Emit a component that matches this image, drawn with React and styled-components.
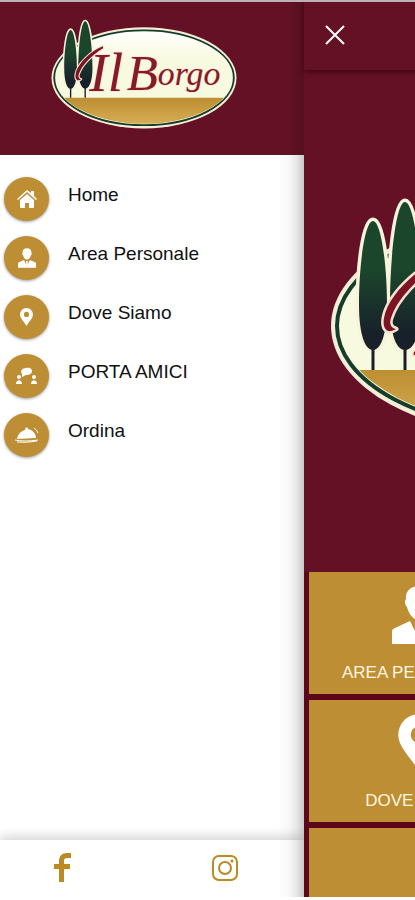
import React, { useId } from "react";
import styled, { createGlobalStyle } from "styled-components";

const wine = "#651125";
const gold = "#bd8e34";

const GlobalStyle = createGlobalStyle`
  *, *::before, *::after { box-sizing: border-box; }
  body {
    margin: 0;
    background: #fff;
    font-family: "Liberation Sans", Arial, sans-serif;
  }
`;

const Shell = styled.div`
  display: flex;
  min-height: 100vh;
  overflow: hidden;
  border-top: 2px solid #bcb1b4;
  border-bottom: 3px solid #fff;
`;

const Drawer = styled.aside`
  display: flex;
  flex-direction: column;
  flex: 0 0 304px;
  background: #fff;
`;

const Brand = styled.header`
  display: flex;
  justify-content: center;
  padding: 17px 16px 26px 0;
  background: linear-gradient(to left, #560e20, ${wine} 16px);
`;

const LogoSvg = styled.svg`
  display: block;
  flex: none;
  width: ${(p) => p.$width};
  height: auto;
`;

const DrawerBody = styled.div`
  display: flex;
  flex: 1;
  flex-direction: column;
  background: linear-gradient(to left, #c9c9c9, #e6e6e6 7px, #f8f8f8 15px, transparent 26px);
`;

const Menu = styled.nav`
  display: flex;
  flex: 1;
  flex-direction: column;
  gap: 15px;
  padding: 22px 4px;
`;

const MenuLink = styled.a`
  display: flex;
  gap: 19px;
  color: #111;
  font-size: 19px;
  line-height: 36px;
  text-decoration: none;
`;

const Disc = styled.span`
  display: grid;
  place-items: center;
  width: 45px;
  height: 44px;
  border-radius: 50%;
  background: ${gold};
  box-shadow: 0 1px 3px rgba(0, 0, 0, 0.4);
  color: #fff;
`;

const Icon = styled.svg`
  display: block;
  width: ${(p) => p.$w}px;
  height: ${(p) => p.$h}px;
  fill: currentColor;
`;

const Social = styled.footer`
  display: flex;
  align-items: center;
  justify-content: space-between;
  height: 57px;
  padding: 0 65px 2px 54px;
  box-shadow: 0 -4px 10px rgba(0, 0, 0, 0.16);
`;

const SocialLink = styled.a`
  color: #bb8a24;
`;

const Page = styled.main`
  display: flex;
  flex: 0 0 455px;
  flex-direction: column;
  background: ${wine};
`;

const TopBar = styled.div`
  height: 68px;
  padding: 17px 15px;
  box-shadow: 0 2px 5px rgba(45, 0, 12, 0.65);
`;

const CloseButton = styled.button`
  display: grid;
  place-items: center;
  width: 32px;
  height: 32px;
  padding: 0;
  border: 0;
  background: none;
  color: #fff;
  cursor: pointer;
`;

const Hero = styled.section`
  display: grid;
  flex: 1;
  place-items: center;
  padding: 0 0 6px 5px;
`;

const Tiles = styled.div`
  display: grid;
  grid-template-columns: 1fr 1fr;
  grid-template-rows: 122px 122px 69px;
  gap: 6px 5px;
  padding: 0 5px;
  background: #5d0619;
`;

const Tile = styled.a`
  display: flex;
  flex-direction: column;
  align-items: center;
  gap: 19px;
  padding-top: 14px;
  background: ${gold};
  color: #fff;
  font-size: 17px;
  line-height: 20px;
  text-decoration: none;
`;

const TileLabel = styled.span`
  color: #fff6e0;
`;

function Logo({ width }) {
  const id = useId();
  const sky = `${id}sky`;
  const field = `${id}field`;
  const tree = `${id}tree`;
  const clip = `${id}clip`;
  const trees =
    "M43 24 C51 24 57 67 57 108 C57 137 51 153 43 153 C35 153 29 137 29 108 C29 67 35 24 43 24Z M75 5 C84 5 91 62 91 106 C91 137 84 153 75 153 C66 153 60 137 60 106 C60 62 66 5 75 5Z";
  const flourish =
    "M114 60 C88 70 58 98 54 121 C52 133 58 137 66 132 C61 131 59 127 61 121 C67 102 88 80 114 64Z";
  return (
    <LogoSvg $width={width} viewBox="0 0 408 242" role="img" aria-label="Il Borgo">
      <defs>
        <linearGradient id={sky} x1="0" y1="0" x2="0" y2="1">
          <stop offset="0" stopColor="#fff" />
          <stop offset="0.3" stopColor="#f8fae0" />
          <stop offset="1" stopColor="#f8fae0" />
        </linearGradient>
        <linearGradient id={field} x1="0" y1="0" x2="0" y2="1">
          <stop offset="0" stopColor="#bd8e32" />
          <stop offset="1" stopColor="#dcb45c" />
        </linearGradient>
        <linearGradient id={tree} x1="0" y1="0" x2="0" y2="1">
          <stop offset="0.45" stopColor="#1b462c" />
          <stop offset="0.9" stopColor="#18202a" />
        </linearGradient>
        <clipPath id={clip}>
          <ellipse cx="204" cy="129" rx="194" ry="101" />
        </clipPath>
      </defs>
      <ellipse cx="204" cy="129" rx="203" ry="111" fill="#f5eed8" />
      <ellipse cx="204" cy="129" rx="197" ry="104" fill={`url(#${sky})`} stroke="#163d2b" strokeWidth="4" />
      <path d="M0 173H408V242H0Z" fill={`url(#${field})`} clipPath={`url(#${clip})`} />
      <path d={trees} fill="#f8f4dc" stroke="#f8f4dc" strokeWidth="7" />
      <path d="M43 145V173M75 145V173" stroke="#18202a" strokeWidth="3" />
      <path d={trees} fill={`url(#${tree})`} />
      <path
        d={flourish}
        fill="#7d1426"
        stroke="#f5e2cf"
        strokeWidth="5"
        strokeLinejoin="round"
        paintOrder="stroke"
      />
      <g
        fill="#871a29"
        stroke="#f5e2cf"
        strokeWidth="3"
        paintOrder="stroke"
        fontFamily="'Liberation Serif', 'Times New Roman', serif"
        fontStyle="italic"
      >
        <text x="84" y="158" fontSize="122">Il</text>
        <text x="166" y="155" fontSize="112">
          B<tspan y="144" fontSize="74">orgo</tspan>
        </text>
      </g>
    </LogoSvg>
  );
}

const HomeIcon = () => (
  <Icon $w={20} $h={20} viewBox="0 0 20 20" aria-hidden="true">
    <path d="M0 10 10 1l4 3V2h3v5l3 3-1 1-9-8-9 8Z" />
    <path d="m10 5 7 6v7q0 1-1 1h-4v-5H8v5H4q-1 0-1-1v-7Z" />
  </Icon>
);

const PersonIcon = ({ w, h }) => (
  <Icon $w={w} $h={h} viewBox="0 0 54 58" aria-hidden="true">
    <path d="M27 0c9 0 14 6 13 13 2 2 1 6-1 8-2 8-7 13-12 13s-10-5-12-13c-2-2-3-6-1-8C13 6 18 0 27 0Z" />
    <path d="M0 58V45q0-2 3-3l15-7 9 18 9-18 15 7q3 1 3 3v13Z" />
    <path d="m23 39 4-1 4 1-2 4 1 7-3 5-3-5 1-7Z" />
  </Icon>
);

const PinIcon = ({ w, h }) => (
  <Icon $w={w} $h={h} viewBox="0 0 40 56" aria-hidden="true">
    <path
      fillRule="evenodd"
      d="M20 0c11 0 20 9 20 20 0 13-13 22-20 36C13 42 0 33 0 20 0 9 9 0 20 0Zm0 12a8 8 0 1 0 0 16 8 8 0 0 0 0-16Z"
    />
  </Icon>
);

const FriendsIcon = () => (
  <Icon $w={22} $h={18} viewBox="0 0 22 18" aria-hidden="true">
    <path d="M10 1c4-1 6 1 6 3 0 3-3 4-6 4L6 10V7C4 4 6 1 10 1Z" />
    <circle cx="3" cy="10" r="2" />
    <circle cx="18" cy="10" r="2" />
    <path d="M0 17c0-5 6-5 6 0ZM15 17c0-5 6-5 6 0Z" />
  </Icon>
);

const ClocheIcon = () => (
  <Icon $w={26} $h={18} viewBox="0 0 26 18" aria-hidden="true">
    <path d="M3 13C4 8 7 5 11 4c0-3 3-3 3-1 5 1 8 5 8 9Z" />
    <path
      d="M1 14q9 2 23 0M3 16q9 1 20-1M20 2q3 2 4 5"
      fill="none"
      stroke="currentColor"
      strokeWidth="1"
    />
  </Icon>
);

const FacebookIcon = () => (
  <Icon $w={17} $h={29} viewBox="0 0 17 29" aria-hidden="true">
    <path d="M5 29V16H0v-5h5V8c0-5 3-8 8-8h4v5h-4q-3 0-3 3v3h6v5h-6v13Z" />
  </Icon>
);

const InstagramIcon = () => (
  <Icon $w={28} $h={28} viewBox="0 0 28 28" aria-hidden="true">
    <g fill="none" stroke="currentColor" strokeWidth="2">
      <rect x="2" y="2" width="24" height="24" rx="6" />
      <circle cx="14" cy="14" r="6" />
    </g>
    <circle cx="21" cy="7" r="1.5" />
  </Icon>
);

const menu = [
  { label: "Home", icon: <HomeIcon /> },
  { label: "Area Personale", icon: <PersonIcon w={18} h={20} /> },
  { label: "Dove Siamo", icon: <PinIcon w={13} h={18} /> },
  { label: "PORTA AMICI", icon: <FriendsIcon /> },
  { label: "Ordina", icon: <ClocheIcon /> },
];

export default function App() {
  return (
    <>
      <GlobalStyle />
      <Shell>
        <Drawer>
          <Brand>
            <Logo width="186px" />
          </Brand>
          <DrawerBody>
            <Menu aria-label="Menu">
              {menu.map((item) => (
                <MenuLink href="#" key={item.label}>
                  <Disc>{item.icon}</Disc>
                  {item.label}
                </MenuLink>
              ))}
            </Menu>
            <Social>
              <SocialLink href="#" aria-label="Facebook">
                <FacebookIcon />
              </SocialLink>
              <SocialLink href="#" aria-label="Instagram">
                <InstagramIcon />
              </SocialLink>
            </Social>
          </DrawerBody>
        </Drawer>
        <Page>
          <TopBar>
            <CloseButton type="button" aria-label="Close menu">
              <Icon $w={20} $h={20} viewBox="0 0 20 20" aria-hidden="true">
                <path d="m1 1 18 18M19 1 1 19" stroke="currentColor" strokeWidth="2" />
              </Icon>
            </CloseButton>
          </TopBar>
          <Hero>
            <Logo width="408px" />
          </Hero>
          <Tiles>
            <Tile href="#">
              <PersonIcon w={54} h={58} />
              <TileLabel>AREA PERSONALE</TileLabel>
            </Tile>
            <Tile href="#" aria-label="Home" />
            <Tile href="#">
              <PinIcon w={42} h={58} />
              <TileLabel>DOVE SIAMO</TileLabel>
            </Tile>
            <Tile href="#" aria-label="Porta amici" />
            <Tile href="#" aria-label="Ordina" />
            <Tile href="#" aria-label="Menu" />
          </Tiles>
        </Page>
      </Shell>
    </>
  );
}
